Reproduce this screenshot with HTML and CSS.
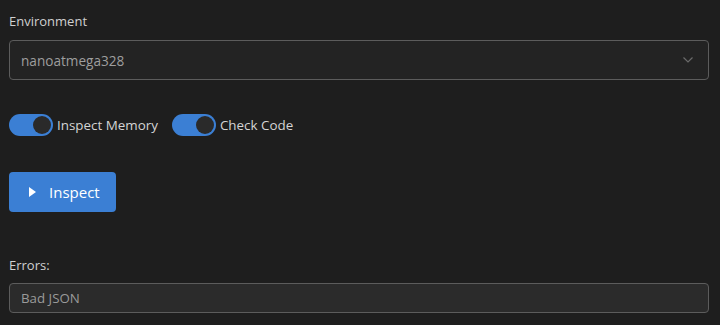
FILE: index.html
```html
<!DOCTYPE html>
<html>
<head>
<meta charset="utf-8">
<link rel="stylesheet" href="styles.css">
</head>
<body>
<div class="panel">
  <label class="label">Environment</label>
  <div class="select">
    <span class="select-value">nanoatmega328</span>
    <svg class="chevron" width="10" height="6" viewBox="0 0 10 6"><path d="M0.5 0.5 L5 5 L9.5 0.5" fill="none" stroke="#6a6a6a" stroke-width="1.2"/></svg>
  </div>
  <div class="toggles">
    <div class="toggle-item"><span class="switch"><span class="knob"></span></span><span class="toggle-label">Inspect Memory</span></div>
    <div class="toggle-item"><span class="switch"><span class="knob"></span></span><span class="toggle-label">Check Code</span></div>
  </div>
  <button class="btn"><svg class="play" width="7" height="10" viewBox="0 0 7 10"><path d="M0 0 L7 5 L0 10 Z" fill="#fff"/></svg><span>Inspect</span></button>
  <label class="label errors-label">Errors:</label>
  <div class="input">Bad JSON</div>
</div>
</body>
</html>
```
FILE: styles.css
```css
html, body {
  margin: 0;
  padding: 0;
  background: #1e1e1e;
}
body {
  font-family: "Open Sans", "Noto Sans", sans-serif;
  color: #d4d4d4;
}
.panel {
  padding: 11px 11px 0 9px;
  display: flex;
  flex-direction: column;
}
.label {
  display: block;
  font-size: 13px;
  line-height: 20px;
  color: #d0d0d0;
  margin-bottom: 9px;
}
.select {
  height: 38px;
  border: 1px solid #5c5c5c;
  border-radius: 4px;
  background: #232323;
  display: flex;
  align-items: center;
  padding: 0 15px 0 11px;
  justify-content: space-between;
}
.select-value {
  font-size: 13.6px;
  color: #9e9e9e;
}
.chevron { display: block; }
.toggles {
  display: flex;
  gap: 14px;
  margin-top: 34px;
  align-items: center;
}
.toggle-item {
  display: flex;
  align-items: center;
  gap: 4px;
}
.switch {
  width: 44px;
  height: 22px;
  border-radius: 11px;
  background: #3b7fd4;
  display: flex;
  align-items: center;
  justify-content: flex-end;
  padding-right: 2px;
  box-sizing: border-box;
}
.knob {
  width: 18px;
  height: 18px;
  border-radius: 50%;
  background: #2a2a2a;
  box-sizing: border-box;
}
.toggle-label {
  font-size: 13.4px;
  color: #d4d4d4;
}
.btn {
  margin-top: 36px;
  align-self: flex-start;
  width: 107px;
  height: 40px;
  background: #3b7fd4;
  border: none;
  border-radius: 4px;
  color: #fff;
  font-family: inherit;
  font-size: 15px;
  display: flex;
  align-items: center;
  padding: 0 0 0 20px;
  gap: 13px;
}
.play { display: block; }
.errors-label {
  margin-top: 43px;
  margin-bottom: 8px;
}
.input {
  height: 28px;
  border: 1px solid #5c5c5c;
  border-radius: 4px;
  background: #2b2b2b;
  font-size: 13.3px;
  color: #9a9a9a;
  display: flex;
  align-items: center;
  padding-left: 11px;
}
```
